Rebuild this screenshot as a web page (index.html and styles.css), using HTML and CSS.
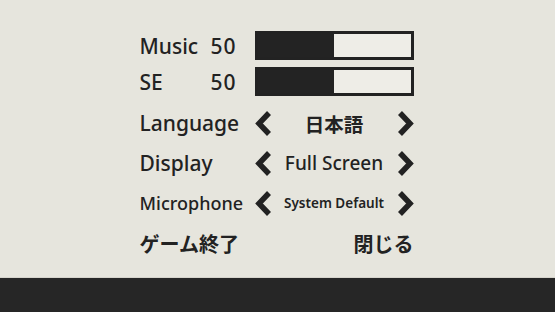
FILE: index.html
```html
<!DOCTYPE html>
<html lang="ja">
<head>
    <meta charset="UTF-8" />
    <meta name="viewport" content="width=device-width, initial-scale=1.0" />
    <title>Settings</title>
    <link rel="stylesheet" href="styles.css">
</head>
<body>
  <div class="menu">
    <!-- VOLUME -->
    <div class="row slider-row">
      <div class="label">
        <span class="name">Music</span>
        <span class="value">50</span>
      </div>
      <div class="bar"><div class="fill" style="width: 50%"></div></div>
    </div>
    <div class="row slider-row">
      <div class="label">
        <span class="name">SE</span>
        <span class="value">50</span>
      </div>
      <div class="bar"><div class="fill" style="width: 50%"></div></div>
    </div>

    <!-- SELECTORS -->
    <div class="row select-row">
      <div class="label">Language</div>
      <div class="selector">
        <svg class="arrow" viewBox="0 0 16 25"><path d="M14 2 L4 12.5 L14 23" /></svg>
        <span class="option jp">日本語</span>
        <svg class="arrow" viewBox="0 0 16 25"><path d="M2 2 L12 12.5 L2 23" /></svg>
      </div>
    </div>
    <div class="row select-row">
      <div class="label">Display</div>
      <div class="selector">
        <svg class="arrow" viewBox="0 0 16 25"><path d="M14 2 L4 12.5 L14 23" /></svg>
        <span class="option">Full Screen</span>
        <svg class="arrow" viewBox="0 0 16 25"><path d="M2 2 L12 12.5 L2 23" /></svg>
      </div>
    </div>
    <div class="row select-row">
      <div class="label small">Microphone</div>
      <div class="selector">
        <svg class="arrow" viewBox="0 0 16 25"><path d="M14 2 L4 12.5 L14 23" /></svg>
        <span class="option small">System Default</span>
        <svg class="arrow" viewBox="0 0 16 25"><path d="M2 2 L12 12.5 L2 23" /></svg>
      </div>
    </div>

    <div class="row footer-row">
      <span class="link">ゲーム終了</span>
      <span class="link">閉じる</span>
    </div>
  </div>

  <div class="bottom-bar"></div>
</body>
</html>
```

FILE: styles.css
```css
body {
    font-family: "Noto Sans", "Noto Sans CJK JP", sans-serif;
    font-weight: 500;
    background: #e6e5dd;
    color: #222222;
    margin: 0;
    height: 312px;
    display: flex;
    flex-direction: column;
    overflow: hidden;
}

.menu {
    flex: 1;
    width: 276px;
    margin: 0 auto;
    padding-top: 31px;
    padding-right: 2px;
    box-sizing: border-box;
}

.row {
    display: flex;
    align-items: center;
}

.label {
    width: 115px;
    font-size: 21px;
    display: flex;
    align-items: baseline;
    justify-content: space-between;
}

    .label.small {
        font-size: 18px;
    }

.slider-row {
    height: 29px;
    margin-bottom: 7px;
}

    .slider-row .label {
        padding-right: 18px;
        box-sizing: border-box;
    }

    .slider-row .value {
        letter-spacing: 1px;
    }

.bar {
    width: 159px;
    height: 29px;
    border: 3px solid #222222;
    box-sizing: border-box;
    background: #eeede7;
}

    .bar .fill {
        height: 100%;
        background: #232323;
    }

.select-row {
    height: 40px;
}

.selector {
    width: 159px;
    display: flex;
    align-items: center;
    justify-content: space-between;
}

.arrow {
    width: 16px;
    height: 25px;
    flex-shrink: 0;
}

    .arrow path {
        fill: none;
        stroke: #222222;
        stroke-width: 5.5;
    }

.option {
    font-size: 19px;
    text-align: center;
    flex: 1;
}

    .option.jp {
        font-size: 19.5px;
        font-weight: 600;
    }

    .option.small {
        font-size: 13.5px;
        font-weight: 600;
    }

.footer-row {
    height: 40px;
    justify-content: space-between;
    font-size: 20px;
    font-weight: 600;
}

.bottom-bar {
    height: 34px;
    background: #262626;
    border-top: 1px solid #d6d4cc;
}
```
